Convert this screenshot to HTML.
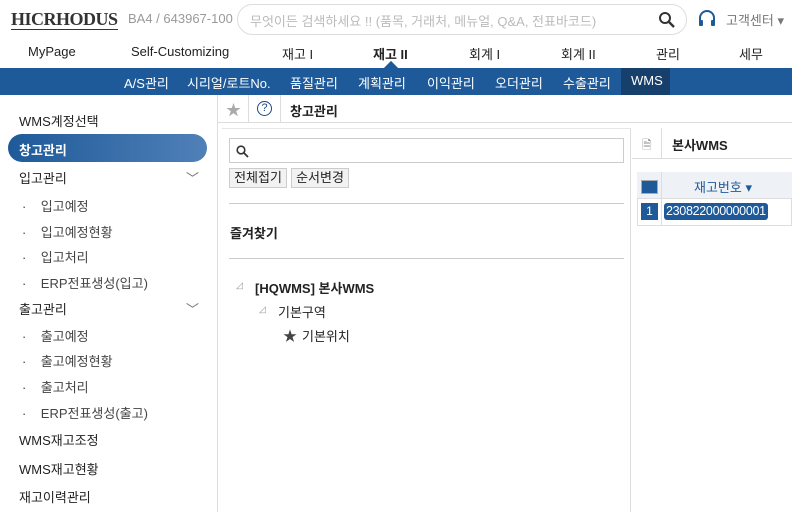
<!DOCTYPE html>
<html><head><meta charset="utf-8"><style>
*{margin:0;padding:0;box-sizing:border-box}
body{width:792px;height:512px;overflow:hidden;background:#fff;font-family:"Liberation Sans","Noto Sans CJK KR",sans-serif;font-size:13px;color:#222;position:relative}
.a{position:absolute;white-space:nowrap}
</style></head><body>
<div class="a" style="left:11px;top:9px;font-family:'Liberation Serif',serif;font-size:18px;font-weight:bold;color:#333;letter-spacing:-0.5px;border-bottom:1px solid #333;line-height:20px">HICRHODUS</div>
<div class="a" style="left:128px;top:11px;color:#999;font-size:13px">BA4 / 643967-100</div>
<div class="a" style="left:237px;top:4px;width:450px;height:31px;border:1px solid #ddd;border-radius:16px"></div>
<div class="a" style="left:250px;top:11px;color:#bbb;font-size:13px">무엇이든 검색하세요 !! (품목, 거래처, 메뉴얼, Q&amp;A, 전표바코드)</div>
<svg class="a" style="left:658px;top:11px" width="18" height="18" viewBox="0 0 18 18"><circle cx="7" cy="7" r="5" fill="none" stroke="#333" stroke-width="2"/><path d="M11 11l5 5" stroke="#333" stroke-width="2.4"/></svg>
<svg class="a" style="left:697px;top:9px" width="20" height="20" viewBox="0 0 20 20"><path d="M3 12V9a7 7 0 0114 0v3" fill="none" stroke="#1e5a99" stroke-width="2"/><rect x="2" y="11" width="4" height="6" rx="1" fill="#1e5a99"/><rect x="14" y="11" width="4" height="6" rx="1" fill="#1e5a99"/></svg>
<div class="a" style="left:726px;top:10px;color:#777;font-size:13px">고객센터 ▾</div>
<div class="a" style="top:44px;left:28px;font-size:13px">MyPage</div>
<div class="a" style="top:44px;left:131px">Self-Customizing</div>
<div class="a" style="top:44px;left:282px">재고 I</div>
<div class="a" style="top:44px;left:373px;font-weight:bold">재고 II</div>
<div class="a" style="top:44px;left:469px">회계 I</div>
<div class="a" style="top:44px;left:561px">회계 II</div>
<div class="a" style="top:44px;left:656px">관리</div>
<div class="a" style="top:44px;left:739px">세무</div>
<div class="a" style="left:0;top:68px;width:792px;height:27px;background:#1e5a99"></div>
<div class="a" style="left:621px;top:68px;width:49px;height:27px;background:#173f6b"></div>
<div class="a" style="left:386px;top:63px;width:10px;height:10px;background:#1e5a99;transform:rotate(45deg)"></div>
<div class="a" style="top:73px;color:#fff;font-size:13px;left:124px">A/S관리</div>
<div class="a" style="top:73px;color:#fff;left:187px">시리얼/로트No.</div>
<div class="a" style="top:73px;color:#fff;left:290px">품질관리</div>
<div class="a" style="top:73px;color:#fff;left:358px">계획관리</div>
<div class="a" style="top:73px;color:#fff;left:427px">이익관리</div>
<div class="a" style="top:73px;color:#fff;left:495px">오더관리</div>
<div class="a" style="top:73px;color:#fff;left:563px">수출관리</div>
<div class="a" style="top:73px;color:#fff;left:631px">WMS</div>
<div class="a" style="left:217px;top:95px;width:1px;height:417px;background:#ddd"></div>
<div class="a" style="left:19px;top:111px">WMS계정선택</div>
<div class="a" style="left:8px;top:134px;width:199px;height:28px;border-radius:14px;background:linear-gradient(90deg,#1e5a99,#5080b8)"></div>
<div class="a" style="left:19px;top:140px;color:#fff;font-weight:bold">창고관리</div>
<div class="a" style="left:19px;top:168px">입고관리</div>
<div class="a" style="left:186px;top:168px;color:#777">﹀</div>
<div class="a" style="left:22px;top:196px;color:#444">·&nbsp;&nbsp;&nbsp;&nbsp;입고예정</div>
<div class="a" style="left:22px;top:222px;color:#444">·&nbsp;&nbsp;&nbsp;&nbsp;입고예정현황</div>
<div class="a" style="left:22px;top:247px;color:#444">·&nbsp;&nbsp;&nbsp;&nbsp;입고처리</div>
<div class="a" style="left:22px;top:273px;color:#444">·&nbsp;&nbsp;&nbsp;&nbsp;ERP전표생성(입고)</div>
<div class="a" style="left:19px;top:299px">출고관리</div>
<div class="a" style="left:186px;top:299px;color:#777">﹀</div>
<div class="a" style="left:22px;top:326px;color:#444">·&nbsp;&nbsp;&nbsp;&nbsp;출고예정</div>
<div class="a" style="left:22px;top:351px;color:#444">·&nbsp;&nbsp;&nbsp;&nbsp;출고예정현황</div>
<div class="a" style="left:22px;top:377px;color:#444">·&nbsp;&nbsp;&nbsp;&nbsp;출고처리</div>
<div class="a" style="left:22px;top:403px;color:#444">·&nbsp;&nbsp;&nbsp;&nbsp;ERP전표생성(출고)</div>
<div class="a" style="left:19px;top:430px">WMS재고조정</div>
<div class="a" style="left:19px;top:459px">WMS재고현황</div>
<div class="a" style="left:19px;top:487px">재고이력관리</div>
<div class="a" style="left:218px;top:122px;width:574px;height:1px;background:#ddd"></div>
<div class="a" style="left:248px;top:95px;width:1px;height:27px;background:#ddd"></div>
<div class="a" style="left:280px;top:95px;width:1px;height:27px;background:#ddd"></div>
<div class="a" style="left:226px;top:99px;color:#aaa;font-size:15px">★</div>
<div class="a" style="left:257px;top:101px;width:15px;height:15px;border:1.5px solid #1e4a7a;border-radius:50%;font-size:11px;text-align:center;line-height:12px;color:#1e4a7a">?</div>
<div class="a" style="left:290px;top:101px;font-weight:bold">창고관리</div>
<div class="a" style="left:222px;top:128px;width:409px;height:384px;border-top:1px solid #e6e6e6;border-right:1px solid #ddd"></div>
<div class="a" style="left:229px;top:138px;width:395px;height:25px;border:1px solid #ccc"></div>
<svg class="a" style="left:236px;top:145px" width="13" height="13" viewBox="0 0 13 13"><circle cx="5" cy="5" r="3.8" fill="none" stroke="#333" stroke-width="1.6"/><path d="M8 8l4 4" stroke="#333" stroke-width="1.8"/></svg>
<div class="a" style="left:229px;top:168px;height:20px;width:58px;border:1px solid #ccc;background:#f2f2f2;text-align:center;line-height:18px">전체접기</div>
<div class="a" style="left:291px;top:168px;height:20px;width:58px;border:1px solid #ccc;background:#f2f2f2;text-align:center;line-height:18px">순서변경</div>
<div class="a" style="left:229px;top:203px;width:395px;height:1px;background:#ccc"></div>
<div class="a" style="left:230px;top:223px;font-weight:bold">즐겨찾기</div>
<div class="a" style="left:229px;top:258px;width:395px;height:1px;background:#ccc"></div>
<div class="a" style="left:236px;top:280px;color:#999;font-size:9px">◿</div>
<div class="a" style="left:255px;top:278px;font-weight:bold">[HQWMS] 본사WMS</div>
<div class="a" style="left:259px;top:304px;color:#999;font-size:9px">◿</div>
<div class="a" style="left:278px;top:302px">기본구역</div>
<div class="a" style="left:283px;top:326px;color:#444;font-size:14px">★</div>
<div class="a" style="left:302px;top:326px">기본위치</div>
<div class="a" style="left:632px;top:158px;width:160px;height:1px;background:#ddd"></div>
<div class="a" style="left:661px;top:128px;width:1px;height:30px;background:#ddd"></div>
<div class="a" style="left:642px;top:136px;color:#888;font-size:12px">🗎</div>
<div class="a" style="left:672px;top:135px;font-weight:bold">본사WMS</div>
<div class="a" style="left:637px;top:172px;width:155px;height:54px;border:1px solid #ddd;background:#fff"></div>
<div class="a" style="left:637px;top:172px;width:155px;height:27px;background:#eef2f6;border-bottom:1px solid #ddd"></div>
<div class="a" style="left:661px;top:172px;width:1px;height:54px;background:#ddd"></div>
<div class="a" style="left:641px;top:180px;width:17px;height:14px;background:#1e5a99;border:1px solid #aaa"></div>
<div class="a" style="left:694px;top:177px;color:#1e5a99">재고번호 ▾</div>
<div class="a" style="left:641px;top:203px;width:17px;height:17px;background:#1e5a99;color:#fff;text-align:center;font-size:12px;line-height:17px">1</div>
<div class="a" style="left:664px;top:203px;width:104px;height:17px;background:#1e5a99;border-radius:3px;color:#fff;font-size:12.5px;letter-spacing:-0.3px;line-height:17px;padding-left:2px">230822000000001</div>
</body></html>
